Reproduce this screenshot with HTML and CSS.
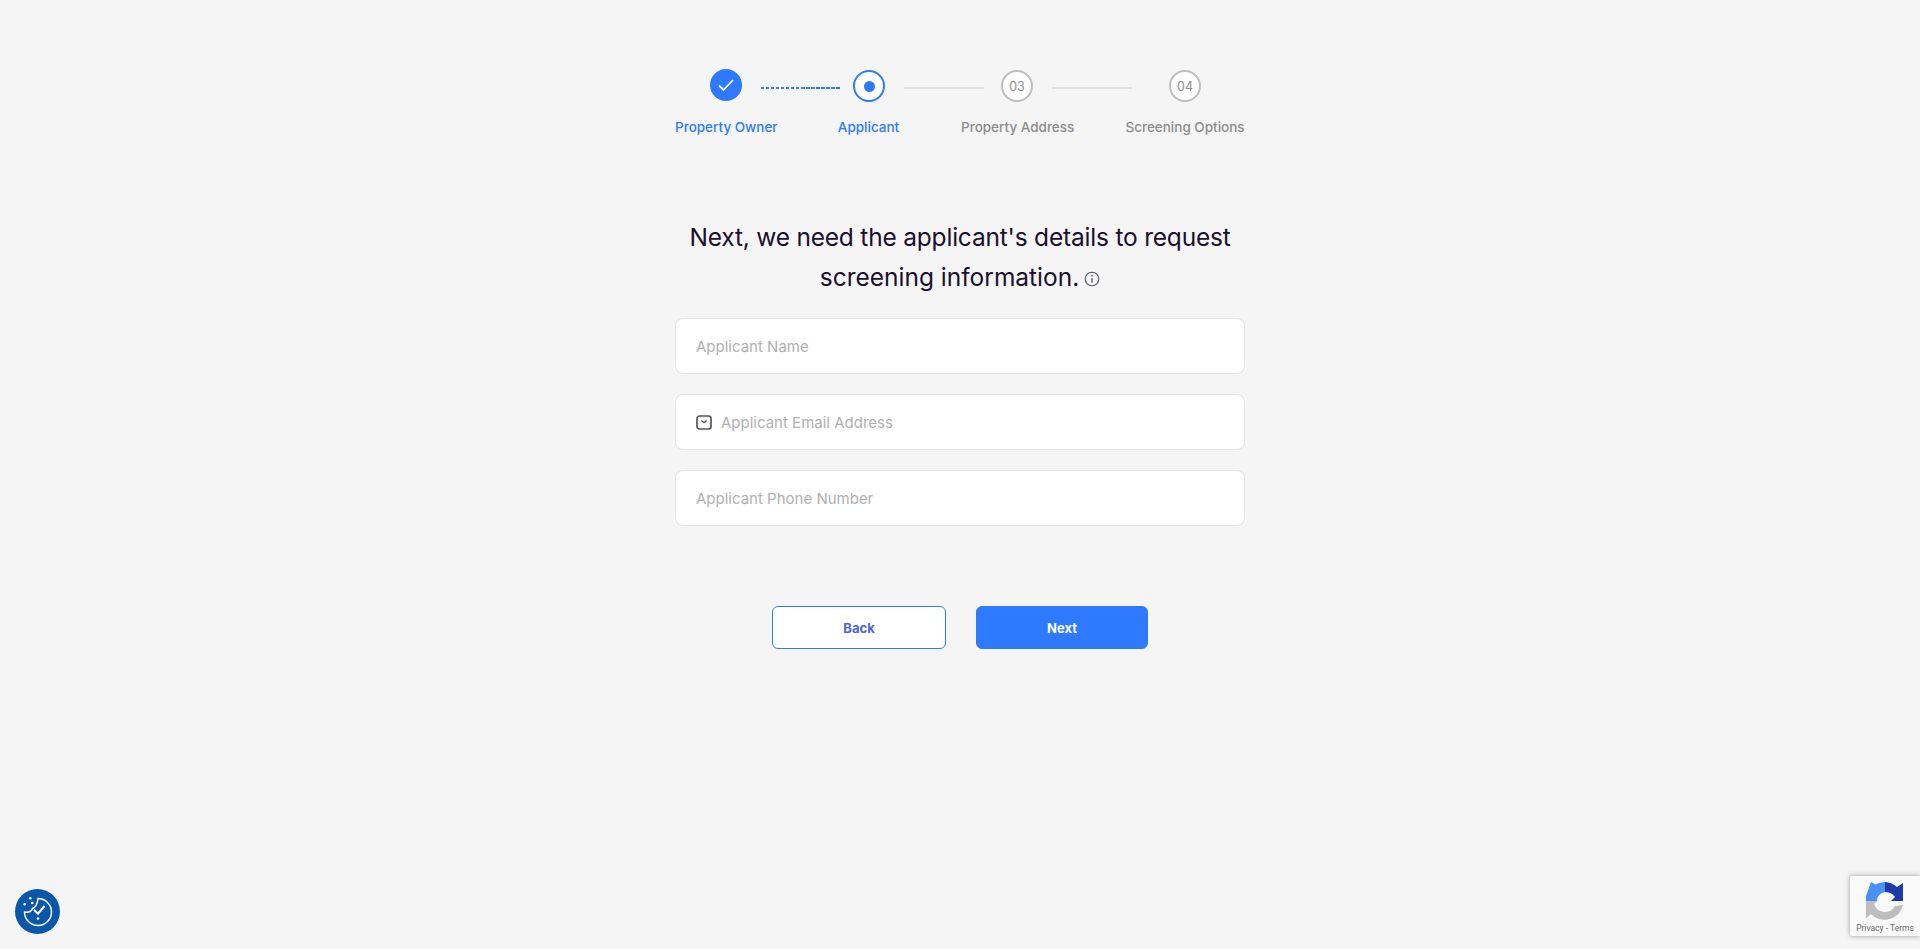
FILE: index.html
```html
<!DOCTYPE HTML>
<html>

<head>
    <meta charset="utf-8">
    <title>Applicant</title>
    <link rel="stylesheet" href="styles.css">
</head>

<body>
    <div class="wizard">
        <div class="track">
            <div class="circle circle-done">
                <svg width="18" height="14" viewBox="0 0 18 14"><path d="M2 7.500 L6.500 12 L16 2" fill="none" stroke="#fff" stroke-width="1.800"/></svg>
            </div>
            <div class="line line-active"></div>
            <div class="circle circle-current"><span class="circle-dot"></span></div>
            <div class="line"></div>
            <div class="circle">03</div>
            <div class="line line-last"></div>
            <div class="circle circle-last">04</div>
        </div>
        <div class="labels">
            <div class="label label-active label-1">Property Owner</div>
            <div class="label label-active label-2">Applicant</div>
            <div class="label label-3">Property Address</div>
            <div class="label label-4">Screening Options</div>
        </div>

        <h1 class="title">Next, we need the applicant's details to request <span class="title-end">screening information.</span><svg class="info" width="16" height="16" viewBox="0 0 16 16"><circle cx="8" cy="8" r="6.800" fill="none" stroke="#55555f" stroke-width="1.100"/><path d="M8 7 V11.800 M8 4 V5.600" fill="none" stroke="#55555f" stroke-width="1.300"/></svg></h1>

        <form class="form">
            <div class="field"><input type="text" placeholder="Applicant Name"></div>
            <div class="field">
                <svg class="mail" width="16" height="15" viewBox="0 0 16 15"><rect x="1" y="1" width="14" height="13" rx="2.500" fill="none" stroke="#55555f" stroke-width="1.700"/><path d="M5.200 5.500 L8 7.500 L10.800 5.500" fill="none" stroke="#55555f" stroke-width="1.500"/></svg>
                <input type="text" placeholder="Applicant Email Address">
            </div>
            <div class="field"><input type="text" placeholder="Applicant Phone Number"></div>
        </form>

        <div class="buttons">
            <button class="btn btn-back" type="button">Back</button>
            <button class="btn btn-next" type="button">Next</button>
        </div>
    </div>

    <div class="cookie">
        <svg width="30" height="30" viewBox="0 0 30 30">
            <path d="M15 1.500 A13.500 13.500 0 1 1 1.500 15 C5 15.500 8.500 14.500 9.500 11.500 C12.500 10.500 14.500 6 15 1.500 Z" fill="none" stroke="#fff" stroke-width="1.500"/>
            <path d="M11 12.700 L15 16.700 L21.500 9" fill="none" stroke="#fff" stroke-width="2"/>
            <circle cx="15" cy="21.500" r="1.300" fill="#fff"/>
            <circle cx="7.300" cy="1.300" r="1.300" fill="#fff"/>
            <circle cx="9.300" cy="6" r="1.300" fill="#fff"/>
            <circle cx="1.700" cy="7.300" r="1.300" fill="#fff"/>
        </svg>
    </div>

    <div class="recaptcha">
        <svg width="38" height="38" viewBox="0 0 38 38">
            <path d="M19 0 A19 19 0 0 0 9.500 2.500 L5 0 L0 14 V19 H11 A9 9 0 0 1 19 10 Z" fill="#4a90f5"/>
            <path d="M19 0 A19 19 0 0 1 31 5 L37 1 V19 H25 L29 15 A12 12 0 0 0 19 10 Z" fill="#1c3aa9"/>
            <path d="M0 19 H11 L8 22 A11.500 11.500 0 0 0 29 24 L37 23 A19 19 0 0 1 5 32 L0 36.500 Z" fill="#bdbdbd"/>
        </svg>
        <div class="recaptcha-text">Privacy - Terms</div>
    </div>
</body>

</html>
```

FILE: styles.css
```css
html, body {
	background: #f5f5f5;
	padding: 0;
	border: 0;
	margin: 0;
	height: 100%;
	overflow: hidden;
}

body {
	font-family: Inter, "Open Sans", sans-serif;
}

.wizard {
	width: 570px;
	margin: 0 auto;
	padding-top: 70px;
}

/* stepper */
.track {
	display: flex;
	align-items: center;
	padding-left: 35px;
}
.circle {
	box-sizing: border-box;
	flex: none;
	width: 32px;
	height: 32px;
	border: 2px solid #bdbdbd;
	border-radius: 50%;
	background: #fff;
	color: #8c8c8c;
	font-size: 12.5px;
	display: flex;
	align-items: center;
	justify-content: center;
}
.circle-done {
	border: 0;
	background: #2d7aff;
	margin-top: -2px;
}
.circle-current {
	border-color: #2d7aff;
}
.circle-dot {
	width: 11px;
	height: 11px;
	border-radius: 50%;
	background: #2d7aff;
}
.circle-last {
	margin-left: 37px;
}
.line {
	flex: none;
	width: 80px;
	height: 2px;
	margin: 4px 17px 0 19px;
	background: #e0e0e4;
}
.line-active {
	margin-right: 12px;
	background: repeating-linear-gradient(90deg, #2d7aff 0, #2d7aff 3.5px, transparent 3.5px, transparent 5px);
}
.line-last {
	margin-right: 0;
}

.labels {
	display: flex;
	margin-top: 16px;
}
.label {
	flex: none;
	font-size: 13.5px;
	line-height: 18px;
	color: #8c8c8c;
	white-space: nowrap;
	text-align: center;
	font-weight: 500;
}
.label-active {
	color: #2d7aff;
}
.label-1 { width: 102px; }
.label-2 { width: 63px; margin-left: 60px; }
.label-3 { width: 112px; margin-left: 61px; }
.label-4 { width: 120px; margin-left: 52px; }

/* heading */
.title {
	margin: 81px 0 21px;
	font-size: 24.5px;
	font-weight: 400;
	letter-spacing: -0.2px;
	line-height: 40px;
	color: #1a0f2e;
	text-align: center;
}
.title-end {
	letter-spacing: 0;
}
.info {
	margin-left: 5px;
	vertical-align: -1px;
}

/* form */
.form {
	display: flex;
	flex-direction: column;
	gap: 20px;
}
.field {
	box-sizing: border-box;
	height: 56px;
	padding: 0 20px;
	border: 1px solid #e4e4e4;
	border-radius: 8px;
	background: #fff;
	display: flex;
	align-items: center;
	gap: 9px;
}
.field input {
	flex: 1;
	border: 0;
	padding: 0;
	outline: 0;
	background: none;
	font-family: inherit;
	font-size: 15px;
}
.field input::placeholder {
	color: #b0b0b0;
	opacity: 1;
}

/* buttons */
.buttons {
	display: flex;
	justify-content: center;
	gap: 30px;
	margin-top: 80px;
}
.btn {
	box-sizing: border-box;
	width: 172px;
	height: 43px;
	border: 1px solid #2d7aff;
	border-radius: 6px;
	font-family: inherit;
	font-size: 13px;
	font-weight: 700;
}
.btn-back {
	width: 174px;
	background: #fff;
	color: #4a63d8;
}
.btn-next {
	background: #2d7aff;
	color: #fff;
}

/* floating widgets */
.cookie {
	position: absolute;
	left: 15px;
	bottom: 15px;
	width: 45px;
	height: 45px;
	border-radius: 50%;
	background: #0a56a8;
	display: flex;
	align-items: center;
	justify-content: center;
}
.recaptcha {
	position: absolute;
	right: 0;
	bottom: 13px;
	box-sizing: border-box;
	width: 70px;
	height: 60px;
	padding-top: 6px;
	background: #f9f9f9;
	border-radius: 2px 0 0 2px;
	box-shadow: 0 0 5px rgba(128, 128, 128, 0.8);
	text-align: center;
}
.recaptcha svg {
	display: block;
	margin-left: 16px;
}
.recaptcha-text {
	margin-top: 3px;
	font-family: Roboto, sans-serif;
	font-size: 8.5px;
	line-height: 11px;
	color: #666;
	white-space: nowrap;
}
```
